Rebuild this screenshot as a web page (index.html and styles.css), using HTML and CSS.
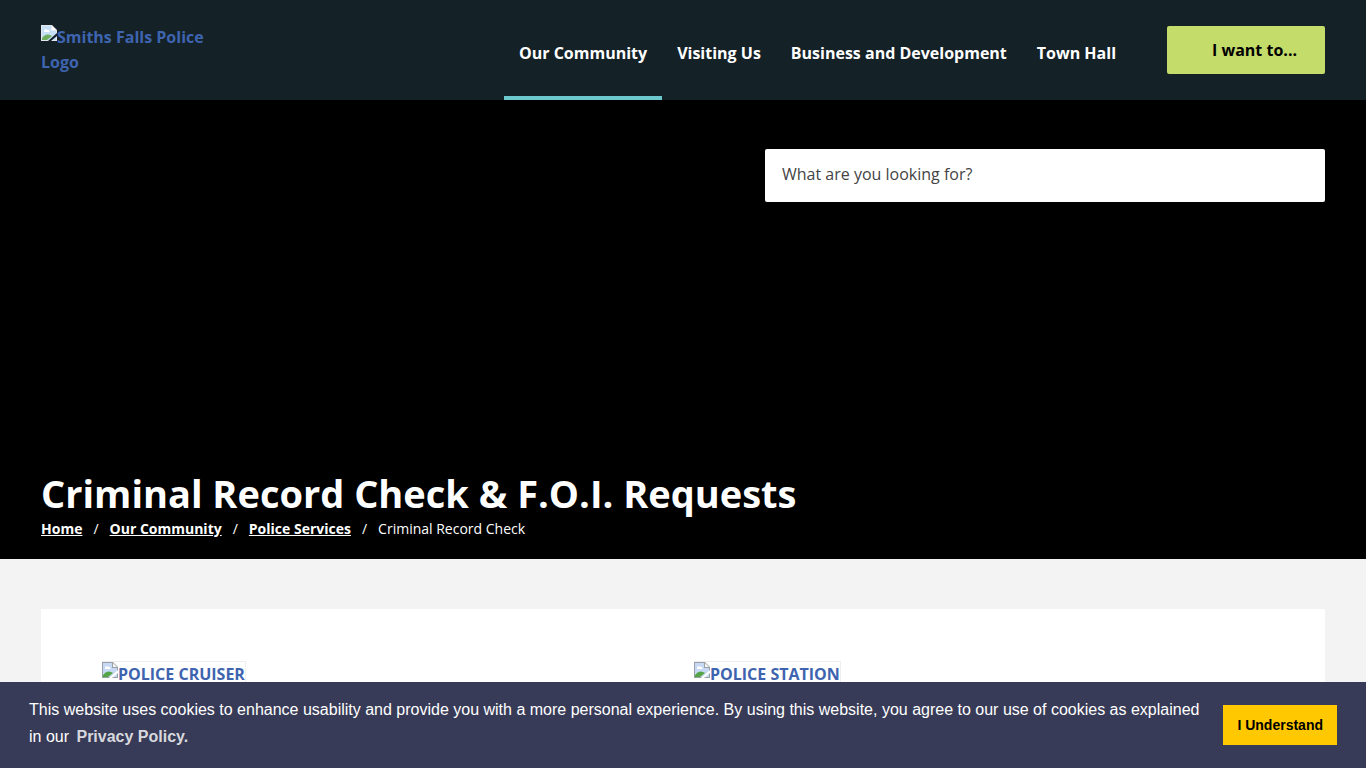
FILE: index.html
```
<!DOCTYPE html>
<html lang="en">
<head>
  <meta charset="UTF-8">
  <meta name="viewport" content="width=device-width, initial-scale=1.0">
  <title>Criminal Record Check - Smiths Falls</title>
  <link rel="stylesheet" href="styles.css">
</head>
<body>
  <svg class="defs" width="0" height="0" aria-hidden="true">
    <symbol id="missing" viewBox="0 0 16 16">
      <path d="M0 0h11l5 5v11H0z" fill="#9a9fa5"/>
      <path d="M1 1h9v5h5v9H1z" fill="#c6d9f5"/>
      <path d="M11 1v4h4z" fill="#f4f5f7"/>
      <path d="M3 6c0-2 3-2 3-1 2-1 3 1 2 2H3z" fill="#fff"/>
      <path d="M1 15v-2c3-4 6-4 8-3l2 1-5 4z" fill="#55a546"/>
      <path class="tear" d="M7 16l9-8v3l-6 5z"/>
    </symbol>
    <symbol id="missing-dark" viewBox="0 0 16 16">
      <path d="M0 0h11l5 5v11H0z" fill="#e4e8ec"/>
      <path d="M1 1h9v5h5v9H1z" fill="#c6e0f5"/>
      <path d="M11 1v4h4z" fill="#fff"/>
      <path d="M3 6c0-2 3-2 3-1 2-1 3 1 2 2H3z" fill="#fff"/>
      <path d="M1 15v-2c3-4 6-4 8-3l2 1-5 4z" fill="#6fae5c"/>
      <path class="tear-dark" d="M7 16l9-8v3l-6 5z"/>
    </symbol>
  </svg>

  <header>
    <div class="container header-row">
      <a class="logo" href="#"><svg class="missing-icon"><use href="#missing-dark"/></svg>Smiths Falls Police Logo</a>
      <nav>
        <a class="active" href="#">Our Community</a>
        <a href="#">Visiting Us</a>
        <a href="#">Business and Development</a>
        <a href="#">Town Hall</a>
      </nav>
      <button type="button" class="want-btn">I want to...</button>
    </div>
  </header>

  <section class="banner">
    <div class="container banner-inner">
      <form class="search">
        <input type="search" aria-label="Search" placeholder="What are you looking for?">
      </form>
      <div class="page-title">
        <h1>Criminal Record Check &amp; F.O.I. Requests</h1>
        <ol class="breadcrumb">
          <li><a href="#">Home</a></li>
          <li><a href="#">Our Community</a></li>
          <li><a href="#">Police Services</a></li>
          <li>Criminal Record Check</li>
        </ol>
      </div>
    </div>
  </section>

  <main class="container">
    <div class="content">
      <div><a class="photo" href="#"><svg class="missing-icon"><use href="#missing"/></svg>POLICE CRUISER</a></div>
      <div><a class="photo" href="#"><svg class="missing-icon"><use href="#missing"/></svg>POLICE STATION</a></div>
    </div>
  </main>

  <div class="cookie-bar" role="dialog" aria-label="Cookie consent">
    <p>This website uses cookies to enhance usability and provide you with a more personal experience. By using this website, you agree to our use of cookies as explained in our <a href="#">Privacy Policy.</a></p>
    <button type="button" class="cookie-btn">I Understand</button>
  </div>
</body>
</html>
```
FILE: styles.css
```
* {
  box-sizing: border-box;
}
body {
  margin: 0;
  background: #f3f3f3;
  font-family: "Segoe UI", "Open Sans", "Noto Sans", sans-serif;
  font-size: 16px;
  line-height: 25px;
}
.defs {
  display: block;
}
.container {
  padding: 0 41px;
}
.missing-icon {
  width: 16px;
  height: 16px;
  vertical-align: top;
}
.tear {
  fill: #fff;
}
.tear-dark {
  fill: #142127;
}

header {
  background: #142127;
}
.header-row {
  display: flex;
  align-items: center;
  height: 100px;
}
.logo {
  width: 180px;
  color: #3e64b0;
  font-weight: 700;
  text-decoration: none;
}
nav {
  display: flex;
  align-self: stretch;
  margin-left: auto;
}
nav a {
  display: flex;
  align-items: center;
  padding: 10px 15px 0;
  border-bottom: 4px solid transparent;
  color: #fff;
  font-weight: 700;
  text-decoration: none;
}
nav a.active {
  border-color: #6dc8cd;
}
.want-btn {
  height: 48px;
  margin-left: 36px;
  padding: 0 28px 0 45px;
  border: none;
  border-radius: 2px;
  background: #c4dc6a;
  color: #000;
  font: inherit;
  font-weight: 700;
  cursor: pointer;
}

.banner {
  background: #000;
  color: #fff;
}
.banner-inner {
  display: flex;
  flex-direction: column;
  justify-content: space-between;
  min-height: 459px;
  padding-top: 49px;
  padding-bottom: 18px;
}
.search {
  width: 560px;
  max-width: 100%;
  align-self: flex-end;
}
.search input {
  display: block;
  width: 100%;
  height: 53px;
  padding: 0 17px 4px;
  border: none;
  border-radius: 2px;
  background: #fff;
  font: inherit;
}
.search input::placeholder {
  color: #444;
  opacity: 1;
}
h1 {
  margin: 0;
  font-size: 38px;
  font-weight: 700;
  line-height: 46px;
}
.breadcrumb {
  display: flex;
  flex-wrap: wrap;
  margin: 0;
  padding: 0;
  list-style: none;
  font-size: 14px;
}
.breadcrumb li + li::before {
  content: "/";
  padding: 0 11px;
}
.breadcrumb a {
  color: #fff;
  font-weight: 700;
}

.content {
  display: grid;
  grid-template-columns: 1fr 1fr;
  gap: 22px;
  margin-top: 50px;
  padding: 52px 61px 60px;
  background: #fff;
}
.photo {
  display: inline-block;
  border: 1px solid #eee;
  border-left: none;
  color: #3e64b0;
  font-weight: 700;
  text-decoration: none;
}

.cookie-bar {
  position: fixed;
  right: 0;
  bottom: 0;
  left: 0;
  display: flex;
  align-items: center;
  gap: 20px;
  padding: 14px 29px;
  background: #383b57;
  color: #fff;
  font-family: "Liberation Sans", Arial, sans-serif;
  line-height: 27px;
}
.cookie-bar p {
  flex: 1;
  margin: 0;
  padding-bottom: 4px;
}
.cookie-bar a {
  margin-left: 3px;
  color: #d7d8dd;
  font-weight: 700;
  text-decoration: none;
}
.cookie-btn {
  height: 40px;
  padding: 0 14px;
  border: none;
  background: #ffc800;
  color: #000;
  font-family: inherit;
  font-size: 14px;
  font-weight: 700;
  cursor: pointer;
}
```
